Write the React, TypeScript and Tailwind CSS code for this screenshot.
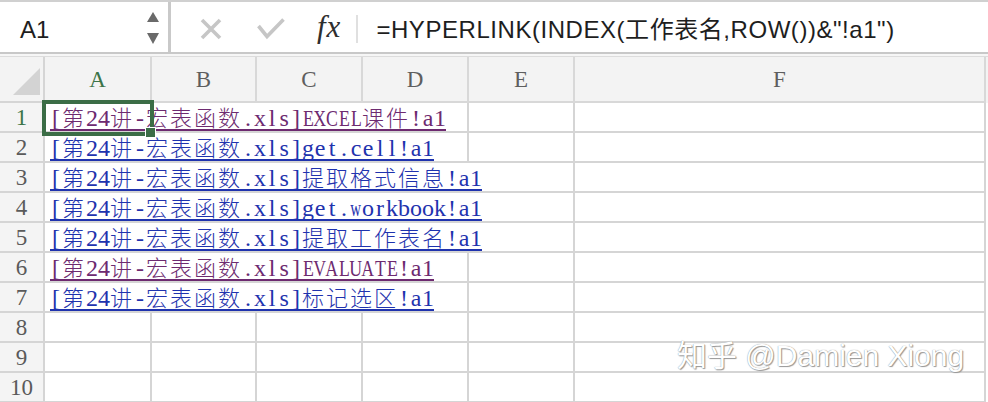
import React from "react";

const CJK = /[\u2E80-\u9FFF\uFF00-\uFFEF\u3000-\u303F]/;

function charClass(ch: string): string | null {
  if (/[mwMW]/.test(ch)) return "inline-block scale-x-[0.62]";
  if (/[A-HK-Z]/.test(ch)) return "inline-block scale-x-[0.74]";
  return null;
}

function Rich({ text }: { text: string }) {
  const runs: { cjk: boolean; s: string }[] = [];
  for (const ch of text) {
    const c = CJK.test(ch);
    const last = runs[runs.length - 1];
    if (last && last.cjk === c) last.s += ch;
    else runs.push({ cjk: c, s: ch });
  }
  return (
    <>
      {runs.map((r, i) =>
        r.cjk ? (
          <span
            key={i}
            className="font-['Noto_Sans_CJK_SC',sans-serif] text-[22px] tracking-[2px] font-light"
          >
            {r.s}
          </span>
        ) : (
          <React.Fragment key={i}>
            {Array.from(r.s).map((ch, j) => {
              const cc = charClass(ch);
              return (
                <span
                  key={j}
                  className="inline-flex w-[12px] justify-center font-['Liberation_Serif',serif] text-[24px]"
                >
                  {cc ? <span className={cc}>{ch}</span> : ch}
                </span>
              );
            })}
          </React.Fragment>
        )
      )}
    </>
  );
}

function Link({ text, visited }: { text: string; visited?: boolean }) {
  return (
    <span
      className={
        visited
          ? "inline-block whitespace-nowrap leading-[14px] pb-[2px] border-b-2 border-[#6d2a70] text-[#6d2a70]"
          : "inline-block whitespace-nowrap leading-[14px] pb-[2px] border-b-2 border-[#1f33ae] text-[#1f33ae]"
      }
    >
      <Rich text={text} />
    </span>
  );
}

type Row = { text?: string; visited?: boolean; span: number };

const rows: Row[] = [
  { text: "[第24讲-宏表函数.xls]EXCEL课件!a1", visited: true, span: 4 },
  { text: "[第24讲-宏表函数.xls]get.cell!a1", span: 4 },
  { text: "[第24讲-宏表函数.xls]提取格式信息!a1", span: 5 },
  { text: "[第24讲-宏表函数.xls]get.workbook!a1", span: 5 },
  { text: "[第24讲-宏表函数.xls]提取工作表名!a1", span: 5 },
  { text: "[第24讲-宏表函数.xls]EVALUATE!a1", visited: true, span: 4 },
  { text: "[第24讲-宏表函数.xls]标记选区!a1", span: 4 },
  { span: 1 },
  { span: 1 },
  { span: 1 },
];

const colW = ["w-[107px]", "w-[105px]", "w-[106px]", "w-[106px]", "w-[106px]", "w-[411px]"];
const cols = ["A", "B", "C", "D", "E", "F"];

const cellBase = "shrink-0 h-full border-r-2 border-b-2 border-[#d5d5d5] flex items-end pl-[5px]";

function DataRow({ r, n }: { r: Row; n: number }) {
  let cells: { w: string; content?: React.ReactNode }[];
  const content = r.text ? <Link text={r.text} visited={r.visited} /> : null;
  if (r.span === 4) {
    cells = [{ w: "w-[424px]", content }, { w: colW[4] }, { w: colW[5] }];
  } else if (r.span === 5) {
    cells = [{ w: "w-[530px]", content }, { w: colW[5] }];
  } else {
    cells = colW.map((w) => ({ w }));
  }
  return (
    <div className="flex h-[30px]">
      <div
        className={
          n === 1
            ? "shrink-0 w-[45px] h-full border-r-2 border-b-2 border-[#d5d5d5] bg-[#f4f4f4] flex items-center justify-center pt-[3px] text-[23px] text-[#3c7448] font-['Liberation_Serif',serif]"
            : "shrink-0 w-[45px] h-full border-r-2 border-b-2 border-[#d5d5d5] bg-[#f4f4f4] flex items-center justify-center pt-[3px] text-[23px] text-[#5a5a5a] font-['Liberation_Serif',serif]"
        }
      >
        {n}
      </div>
      {cells.map((c, i) => (
        <div key={i} className={`${cellBase} ${c.w}`}>
          {c.content}
        </div>
      ))}
    </div>
  );
}

export default function App() {
  return (
    <div className="relative w-[988px] h-[402px] overflow-hidden bg-white">
      {/* Toolbar */}
      <div className="flex h-[52px] border-t-2 border-[#d0d0d0] bg-white">
        <div className="w-[171px] shrink-0 border-r-[3px] border-[#c9c9c9] flex items-center justify-between pl-[20px] pr-[8px]">
          <span className="text-[24px] text-[#1e1e1e] font-['Liberation_Sans',sans-serif] pt-[6px]">A1</span>
          <svg width="14" height="34" viewBox="0 0 14 34" className="mt-[4px]">
            <polygon points="1,10 13,10 7,0" fill="#6a6a6a" />
            <polygon points="1,21 13,21 7,32" fill="#6a6a6a" />
          </svg>
        </div>
        <div className="flex-1 flex items-center">
          <svg width="22" height="22" viewBox="0 0 22 22" className="ml-[29px] mt-[4px]">
            <path d="M2 2 L20 20 M20 2 L2 20" stroke="#c6c6c6" strokeWidth="3.6" strokeLinecap="butt" />
          </svg>
          <svg width="28" height="22" viewBox="0 0 28 22" className="ml-[35px] mt-[4px]">
            <path d="M1.5 8 L10 18.5 L26.5 1.5" stroke="#c6c6c6" strokeWidth="3.6" fill="none" />
          </svg>
          <span className="ml-[32px] text-[31px] italic text-[#2e2e2e] font-['Liberation_Serif',serif] leading-none pb-[2px] tracking-[1px]">
            fx
          </span>
          <div className="ml-[15px] w-[2px] h-[28px] bg-[#e0e0e0] mt-[4px]" />
          <span className="ml-[18px] pt-[6px] whitespace-nowrap text-[24px] text-[#1e1e1e] font-['Liberation_Sans','Noto_Sans_CJK_SC',sans-serif] tracking-[0.55px]">
            =HYPERLINK(INDEX(工作表名,ROW())&amp;"!a1")
          </span>
        </div>
      </div>
      <div className="h-[2px] bg-[#c8c8c8]" />
      <div className="h-[2px] bg-[#f6f6f6]" />
      <div className="h-[1px] bg-[#dcdcdc]" />

      {/* Column header */}
      <div className="flex h-[46px] bg-[#f3f3f3]">
        <div className="shrink-0 w-[45px] h-full border-r-2 border-b-2 border-[#d5d5d5] flex items-end justify-end pr-[3px] pb-[6px]">
          <svg width="27" height="27" viewBox="0 0 27 27">
            <polygon points="27,0 27,27 0,27" fill="#d3d3d3" />
          </svg>
        </div>
        {cols.map((c, i) => (
          <div
            key={c}
            className={`shrink-0 h-full border-r-2 border-b-2 border-[#d8d8d8] flex items-center justify-center pt-[2px] text-[23px] font-['Liberation_Serif',serif] ${colW[i]} ${
              i === 0 ? "text-[#3c7448]" : "text-[#5e5e5e]"
            }`}
          >
            {c}
          </div>
        ))}
      </div>

      {/* Rows */}
      <div className="relative">
        {rows.map((r, i) => (
          <DataRow key={i} r={r} n={i + 1} />
        ))}
        {/* Selection */}
        <div className="absolute left-[42px] top-[-3px] w-[112px] h-[36px] border-[4px] border-[#3b6d46]" />
        <div className="absolute left-[145px] top-[24px] w-[11px] h-[11px] bg-[#3b6d46] border border-white" />
      </div>

      {/* Watermark */}
      <div className="absolute left-[677px] top-[339px] whitespace-nowrap text-[30px] leading-[34px] text-white font-['Liberation_Sans','Noto_Sans_CJK_SC',sans-serif] [text-shadow:0_0_1px_#7a7a7a,1px_1px_1px_#9a9a9a]">
        知乎 @Damien Xiong
      </div>
    </div>
  );
}
